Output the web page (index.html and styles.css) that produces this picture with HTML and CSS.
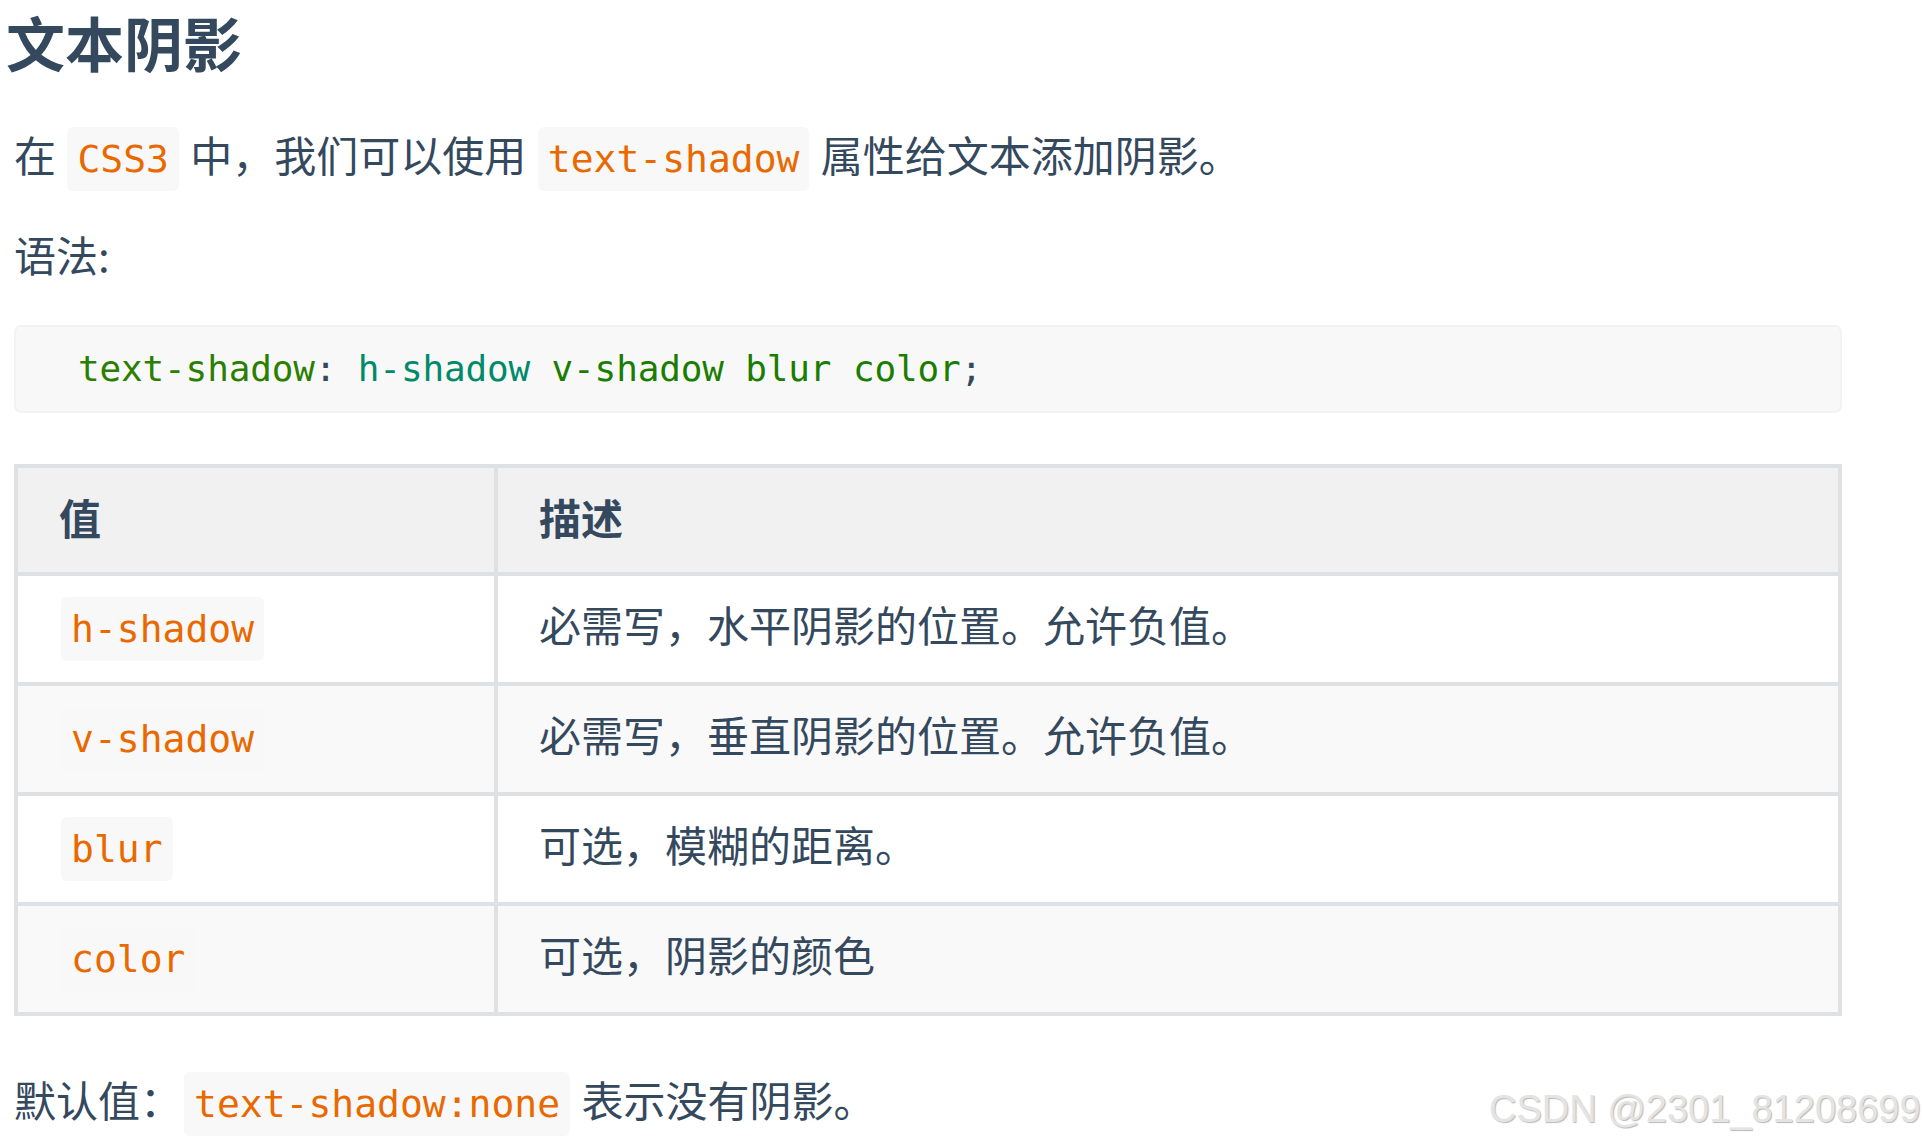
FILE: index.html
```html
<!DOCTYPE html>
<html lang="zh-CN">
<head>
<meta charset="utf-8">
<title>文本阴影</title>
<link rel="stylesheet" href="styles.css">
</head>
<body>
<main class="page">
  <h1 class="title">文本阴影</h1>
  <p class="para first">在 <code class="ic">CSS3</code> 中，我们可以使用 <code class="ic">text-shadow</code> 属性给文本添加阴影。</p>
  <p class="para">语法:</p>
  <pre class="block"><code><span class="t-prop">text-shadow</span><span class="t-punc">:</span> <span class="t-val">h-shadow</span> <span class="t-val2">v-shadow blur color</span><span class="t-punc">;</span></code></pre>
  <table class="tbl">
    <thead>
      <tr><th class="c1">值</th><th>描述</th></tr>
    </thead>
    <tbody>
      <tr><td><code class="ic">h-shadow</code></td><td>必需写，水平阴影的位置。允许负值。</td></tr>
      <tr><td><code class="ic">v-shadow</code></td><td>必需写，垂直阴影的位置。允许负值。</td></tr>
      <tr><td><code class="ic">blur</code></td><td>可选，模糊的距离。</td></tr>
      <tr><td><code class="ic">color</code></td><td>可选，阴影的颜色</td></tr>
    </tbody>
  </table>
  <p class="para last">默认值：<code class="ic">text-shadow:none</code> 表示没有阴影。</p>
</main>
<div class="watermark">CSDN @2301_81208699</div>
</body>
</html>
```

FILE: styles.css
```css
html, body {
  margin: 0;
  padding: 0;
  background: #ffffff;
}
body {
  position: relative;
  width: 1926px;
  height: 1141px;
  overflow: hidden;
  font-family: "Noto Sans CJK SC", "Noto Sans", sans-serif;
  color: #34495e;
}
.page {
  padding: 0 84px 0 14px;
}
.title {
  margin: 7px 0 0 -8px;
  font-size: 59px;
  line-height: 70px;
  font-weight: 700;
  color: #34495e;
}
.para {
  margin: 33px 0 0;
  font-size: 42px;
  line-height: 67px;
}
.para.first {
  margin-top: 43px;
}
.para.last {
  margin-top: 49px;
}
.ic {
  font-family: "DejaVu Sans Mono", "Liberation Mono", monospace;
  font-size: 38px;
  line-height: 1;
  color: #e96900;
  background: #f8f8f8;
  border-radius: 6px;
  padding: 10px 10px;
  margin: 0 2px;
}
.block {
  margin: 38px 0 0;
  height: 88px;
  box-sizing: border-box;
  background: #f8f8f8;
  border: 2px solid #f2f2f2;
  border-radius: 7px;
  padding: 20px 62px 0;
  font-family: "DejaVu Sans Mono", "Liberation Mono", monospace;
  font-size: 36px;
  line-height: 44px;
  color: #34495e;
  overflow: hidden;
}
.block code {
  font-family: inherit;
  letter-spacing: -0.15px;
}
.t-prop { color: #2a7f00; }
.t-val { color: #008a6a; }
.t-val2 { color: #1b7d00; }
.t-punc { color: #34495e; }
.tbl {
  margin-top: 51px;
  width: 1828px;
  table-layout: fixed;
  border-collapse: separate;
  border-spacing: 0;
  border-top: 4px solid #dfe2e5;
  border-left: 4px solid #dfe2e5;
  font-size: 42px;
}
.tbl th, .tbl td {
  box-sizing: border-box;
  border-right: 4px solid #dfe2e5;
  border-bottom: 4px solid #dfe2e5;
  text-align: left;
  line-height: 68px;
  padding: 14px 40px 24px 41px;
  vertical-align: middle;
}
.tbl th {
  background: #f1f1f1;
  font-weight: 700;
  padding-top: 15px;
  padding-bottom: 21px;
}
.tbl th.c1 {
  width: 480px;
}
.tbl tbody tr:nth-child(2n) td {
  background: #f9f9f9;
}
.watermark {
  position: absolute;
  left: 1489px;
  top: 1088px;
  font-family: "Liberation Sans", Arial, sans-serif;
  font-size: 38px;
  line-height: 43px;
  color: #e4e4e4;
  text-shadow: 1px 1px 1px #b8b8b8, -1px -1px 0 #ffffff;
  white-space: nowrap;
}
```
